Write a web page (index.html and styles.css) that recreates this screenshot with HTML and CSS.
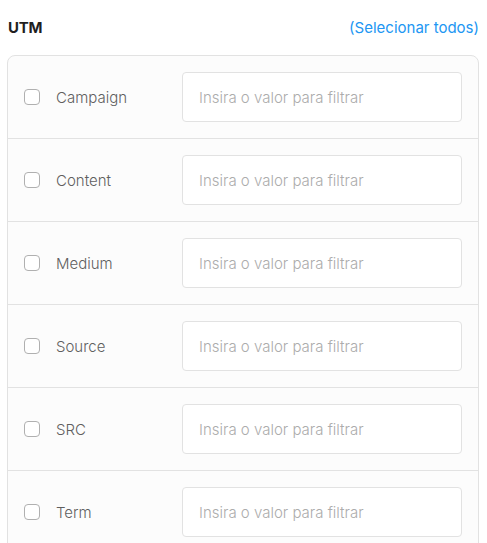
FILE: index.html
```html
<!DOCTYPE html>
<html lang="pt-BR">
    <head>
        <meta charset="UTF-8">
        <meta name="viewport" content="width=device-width, initial-scale=1.0">
        <title>Filtro UTM</title>
        <link rel="stylesheet" href="styles.css">
    </head>
    <body>
        <div class="utm-panel">
            <div class="utm-header">
                <h3>UTM</h3>
                <a href="#" class="select-all">(Selecionar todos)</a>
            </div>

            <div class="utm-list">
                <div class="utm-row">
                    <input type="checkbox" id="campaign" class="utm-check">
                    <label for="campaign">Campaign</label>
                    <input type="text" class="utm-input" placeholder="Insira o valor para filtrar">
                </div>
                <div class="utm-row">
                    <input type="checkbox" id="content" class="utm-check">
                    <label for="content">Content</label>
                    <input type="text" class="utm-input" placeholder="Insira o valor para filtrar">
                </div>
                <div class="utm-row">
                    <input type="checkbox" id="medium" class="utm-check">
                    <label for="medium">Medium</label>
                    <input type="text" class="utm-input" placeholder="Insira o valor para filtrar">
                </div>
                <div class="utm-row">
                    <input type="checkbox" id="source" class="utm-check">
                    <label for="source">Source</label>
                    <input type="text" class="utm-input" placeholder="Insira o valor para filtrar">
                </div>
                <div class="utm-row">
                    <input type="checkbox" id="src" class="utm-check">
                    <label for="src">SRC</label>
                    <input type="text" class="utm-input" placeholder="Insira o valor para filtrar">
                </div>
                <div class="utm-row">
                    <input type="checkbox" id="term" class="utm-check">
                    <label for="term">Term</label>
                    <input type="text" class="utm-input" placeholder="Insira o valor para filtrar">
                </div>
            </div>
        </div>
    </body>
</html>
```

FILE: styles.css
```css
:root {
    --text: #1f1f1f;
    --label: #5f5f5f;
    --placeholder: #acacac;
    --link: #2196f3;
    --border: #e2e2e2;
    --card-bg: #fcfcfc;
    --radius: 8px;
}

* {
    margin: 0;
    padding: 0;
    box-sizing: border-box;
}

body {
    font-family: Inter, 'Noto Sans', sans-serif;
    background: #fff;
    padding: 0 8px 0 7px;
}

.utm-header {
    display: flex;
    justify-content: space-between;
    align-items: center;
    height: 55px;
    padding-left: 1px;
}

.utm-header h3 {
    font-size: 15px;
    font-weight: 700;
    color: var(--text);
    letter-spacing: -0.3px;
}

.select-all {
    font-size: 15px;
    color: var(--link);
    text-decoration: none;
}

.utm-list {
    background: var(--card-bg);
    border: 1px solid var(--border);
    border-radius: var(--radius);
}

.utm-row {
    display: grid;
    grid-template-columns: 16px 110px 1fr;
    column-gap: 16px;
    align-items: center;
    padding: 16px 16px 16px 16px;
    border-bottom: 1px solid var(--border);
}

.utm-row:last-child {
    border-bottom: none;
}

.utm-check {
    appearance: none;
    width: 16px;
    height: 16px;
    border: 1px solid #b0b0b0;
    border-radius: 4px;
    background: #fff;
    cursor: pointer;
}

.utm-row label {
    font-size: 15px;
    font-weight: 300;
    color: var(--label);
    cursor: pointer;
}

.utm-input {
    width: 100%;
    height: 50px;
    padding: 0 16px;
    border: 1px solid var(--border);
    border-radius: 4px;
    background: #fff;
    font-family: inherit;
    font-size: 15px;
    font-weight: 300;
    color: var(--text);
    outline: none;
}

.utm-input::placeholder {
    color: var(--placeholder);
}
```
